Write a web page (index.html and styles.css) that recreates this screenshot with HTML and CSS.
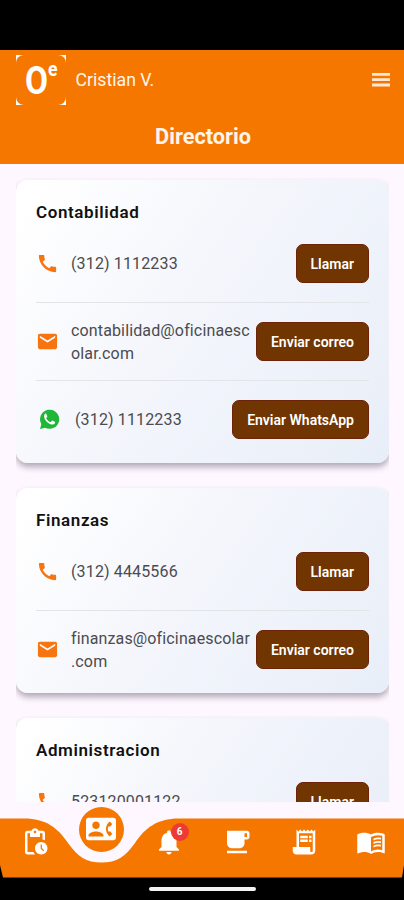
FILE: index.html
```html
<!DOCTYPE html>
<html lang="es">
<head>
  <meta charset="UTF-8">
  <meta name="viewport" content="width=device-width, initial-scale=1.0">
  <title>Oficina Escolar – Directorio</title>
  <link rel="stylesheet" href="styles.css">
</head>
<body>

  <!-- iconos compartidos -->
  <svg class="sprite" width="0" height="0">
    <symbol id="i-phone" viewBox="0 0 24 24">
      <path d="M20.01 15.38c-1.23 0-2.42-.2-3.53-.56-.35-.12-.74-.03-1.01.24l-1.57 1.97c-2.83-1.35-5.48-3.9-6.89-6.83l1.95-1.66c.27-.28.35-.67.24-1.02-.37-1.11-.56-2.3-.56-3.53 0-.54-.45-.99-.99-.99H4.19C3.65 3 3 3.24 3 3.99 3 13.28 10.73 21 20.01 21c.71 0 .99-.63.99-1.18v-3.45c0-.54-.45-.99-.99-.99z"/>
    </symbol>
    <symbol id="i-mail" viewBox="0 0 24 24">
      <path d="M20 4H4c-1.1 0-1.99.9-1.99 2L2 18c0 1.1.9 2 2 2h16c1.1 0 2-.9 2-2V6c0-1.1-.9-2-2-2zm0 4l-8 5-8-5V6l8 5 8-5v2z"/>
    </symbol>
  </svg>

  <div class="status-bar"></div>

  <header class="header">
    <div class="user-row">
      <div class="logo">
        <svg viewBox="0 0 50 50" width="50" height="50">
          <text class="logo-o" x="9" y="38.5" textLength="23" lengthAdjust="spacingAndGlyphs">O</text>
          <text class="logo-e" x="32" y="20.5" textLength="9.5" lengthAdjust="spacingAndGlyphs">e</text>
        </svg>
      </div>
      <span class="user-name">Cristian V.</span>
      <svg class="menu" viewBox="0 0 18 14" width="18" height="14"><path d="M0 0h18v2.8H0zM0 5.3h18v2.8H0zM0 10.6h18v2.8H0z"/></svg>
    </div>
    <h1>Directorio</h1>
  </header>

  <main class="directory">
    <section class="card">
      <h2>Contabilidad</h2>
      <div class="row">
        <svg class="icon"><use href="#i-phone"/></svg>
        <span class="value">(312) 1112233</span>
        <button>Llamar</button>
      </div>
      <div class="row">
        <svg class="icon"><use href="#i-mail"/></svg>
        <span class="value">contabilidad@oficinaescolar.com</span>
        <button>Enviar correo</button>
      </div>
      <div class="row">
        <svg class="icon whatsapp" viewBox="0 0 24 24">
          <path class="wa-bubble" d="M2.2 21.8l1.3-5A10 10 0 1 1 7.3 20.5z"/>
          <path class="wa-phone" d="M8.7 6.3c-.3-.6-.9-.6-1.3-.2-.8.8-1.2 1.7-1 2.9.7 4 4.1 7.400 8.100 8.200 1.400.3 2.600-.3 3.200-1.500.3-.6.3-1.100-.1-1.300l-2.300-1.200c-.4-.2-.7-.1-1 .3l-.8 1c-.2.3-.5.3-.8.2-1.900-.8-3.100-2-4-3.700-.2-.3-.1-.6.1-.8.8-.9 1.100-1.200.8-1.900z"/>
        </svg>
        <span class="value">(312) 1112233</span>
        <button>Enviar WhatsApp</button>
      </div>
    </section>

    <section class="card">
      <h2>Finanzas</h2>
      <div class="row">
        <svg class="icon"><use href="#i-phone"/></svg>
        <span class="value">(312) 4445566</span>
        <button>Llamar</button>
      </div>
      <div class="row">
        <svg class="icon"><use href="#i-mail"/></svg>
        <span class="value">finanzas@oficinaescolar.com</span>
        <button>Enviar correo</button>
      </div>
    </section>

    <section class="card">
      <h2>Administracion</h2>
      <div class="row">
        <svg class="icon"><use href="#i-phone"/></svg>
        <span class="value">523120001122</span>
        <button>Llamar</button>
      </div>
    </section>
  </main>

  <nav class="bottom-nav">
    <!-- barra con la curva bajo el elemento activo -->
    <svg class="nav-shape" viewBox="0 0 404 60" width="404" height="60">
      <path d="M0 .5H24C46 .5 58 10 68 25C78 39 86 44.5 101.5 44.5C117 44.5 125 39 135 25C145 10 157 .5 179 .5H404V47L402 59.5H3L0 47z"/>
    </svg>
    <a class="nav-item">
      <svg viewBox="0 0 24 24"><path d="M17 12c-2.760 0-5 2.240-5 5s2.240 5 5 5 5-2.240 5-5-2.240-5-5-5zm1.650 7.350L16.500 17.200V14h1v2.790l1.850 1.850-.7.71zM18 3h-3.180C14.400 1.840 13.300 1 12 1s-2.400.84-2.820 2H6c-1.100 0-2 .9-2 2v15c0 1.100.9 2 2 2h6.110c-.59-.57-1.070-1.250-1.420-2H6V5h2v3h8V5h2v5.080c.71.1 1.380.31 2 .6V5c0-1.100-.9-2-2-2zm-6 2c-.55 0-1-.45-1-1s.45-1 1-1 1 .45 1 1-.45 1-1 1z"/></svg>
    </a>
    <a class="nav-item active">
      <svg viewBox="0 0 24 24"><path d="M22 3H2C.9 3 0 3.900 0 5v14c0 1.100.9 2 2 2h20c1.100 0 1.990-.9 1.990-2L24 5c0-1.100-.9-2-2-2zM8 6c1.660 0 3 1.340 3 3s-1.340 3-3 3-3-1.340-3-3 1.340-3 3-3zm6 12H2v-1c0-2 4-3.100 6-3.100s6 1.100 6 3.100v1zm3.850-4h1.640L21 16l-1.990 1.990c-1.310-.98-2.280-2.380-2.730-3.990-.18-.64-.28-1.310-.28-2s.1-1.360.28-2c.45-1.620 1.420-3.010 2.730-3.990L21 8l-1.510 2h-1.640c-.22.63-.35 1.300-.35 2s.13 1.370.35 2z"/></svg>
    </a>
    <a class="nav-item">
      <svg viewBox="0 0 24 24"><path d="M12 22c1.100 0 2-.9 2-2h-4c0 1.100.89 2 2 2zm6-6v-5c0-3.070-1.640-5.640-4.500-6.320V4c0-.83-.67-1.500-1.500-1.500s-1.500.67-1.500 1.500v.68C7.630 5.360 6 7.920 6 11v5l-2 2v1h16v-1l-2-2z"/></svg>
      <span class="badge">6</span>
    </a>
    <a class="nav-item">
      <svg viewBox="0 0 24 24"><path d="M20 3H4v10c0 2.210 1.790 4 4 4h6c2.210 0 4-1.790 4-4v-3h2c1.110 0 2-.89 2-2V5c0-1.110-.89-2-2-2zm0 5h-2V5h2v3zM4 19h16v2H4v-2z"/></svg>
    </a>
    <a class="nav-item">
      <svg viewBox="0 0 24 24"><path d="M19.500 3.500L18 2l-1.500 1.500L15 2l-1.500 1.500L12 2l-1.500 1.500L9 2 7.500 3.500 6 2v14H3v3c0 1.660 1.340 3 3 3h12c1.660 0 3-1.340 3-3V2l-1.500 1.500zM19 19c0 .55-.45 1-1 1s-1-.45-1-1v-3H8V5h11v14zM9 7h6v2H9zM16 7h2v2h-2zM9 10h6v2H9zM16 10h2v2h-2z"/></svg>
    </a>
    <a class="nav-item">
      <svg viewBox="0 0 24 24"><path d="M21 5c-1.110-.35-2.330-.5-3.500-.5-1.950 0-4.050.4-5.500 1.500-1.450-1.100-3.550-1.500-5.500-1.500S2.450 4.900 1 6v14.650c0 .25.25.5.5.5.1 0 .15-.05.25-.05C3.100 20.450 5.050 20 6.500 20c1.950 0 4.050.4 5.500 1.500 1.350-.85 3.800-1.500 5.500-1.500 1.650 0 3.350.3 4.750 1.050.1.05.15.05.25.05.25 0 .5-.25.5-.5V6c-.6-.45-1.250-.75-2-1zm0 13.500c-1.100-.35-2.300-.5-3.500-.5-1.700 0-4.150.65-5.500 1.500V8c1.350-.85 3.800-1.500 5.500-1.500 1.200 0 2.400.15 3.500.5v11.500z"/><path d="M14 9.200q2.500-1.200 6-.7v1.500q-3.500-.5-6 .7zM14 12q2.500-1.200 6-.7v1.500q-3.500-.5-6 .7zM14 14.800q2.500-1.200 6-.7v1.500q-3.500-.5-6 .7z"/></svg>
    </a>
  </nav>

  <div class="gesture-bar"><span></span></div>

</body>
</html>
```
FILE: styles.css
```css
* {
  box-sizing: border-box;
}

body {
  margin: 0;
  height: 900px;
  display: flex;
  flex-direction: column;
  overflow: hidden;
  font-family: Roboto, sans-serif;
  background-color: #fef7ff;
}

.sprite {
  position: absolute;
}

.status-bar {
  height: 50px;
  background: #000;
}

.header {
  height: 114px;
  padding: 4px 14px 0 16px;
  background: #f67700;
  color: #fff5ec;
}

.user-row {
  display: flex;
  align-items: center;
  height: 51px;
}

.logo {
  width: 50px;
  height: 50px;
  background: linear-gradient(#f67700, #f67700) center / 48px 34px no-repeat, #fff;
}

.logo svg {
  display: block;
  border-radius: 8px;
  background: #f67700;
}

.logo text {
  fill: #fff;
  font-weight: 700;
}

.logo-o {
  font-size: 39px;
}

.logo-e {
  font-size: 21px;
}

.user-name {
  flex: 1;
  margin-left: 9.5px;
  font-size: 17.7px;
}

.menu {
  fill: #ffe9d6;
}

.header h1 {
  margin: 20px 0 0;
  text-align: center;
  font-size: 21.7px;
  line-height: 24px;
  font-weight: 700;
}

.directory {
  height: 638px;
  margin: 0 15px 0 16px;
  padding-top: 16px;
  overflow: hidden;
}

.card {
  margin-bottom: 25px;
  padding: 20px 20px 5px;
  border-radius: 12px;
  background: linear-gradient(125deg, #fff 5%, #f4f6fc 45%, #e8eef8 100%);
  box-shadow: 0 4px 6px rgba(60, 50, 70, 0.4);
}

.card h2 {
  margin: 0;
  font-size: 17px;
  line-height: 25px;
  font-weight: 600;
  letter-spacing: 0.6px;
  color: #111;
}

.row {
  display: flex;
  align-items: center;
  height: 77px;
}

.row + .row {
  height: 78px;
  border-top: 1px solid #e2e4e8;
}

.icon {
  flex: none;
  width: 23px;
  height: 23px;
  margin-right: 12px;
  fill: #f77510;
}

.icon.whatsapp {
  margin: 0 14px 0 2px;
}

.wa-bubble {
  fill: #20b638;
}

.wa-phone {
  fill: #fff;
}

.value {
  flex: 1;
  min-width: 0;
  padding-right: 4px;
  font-size: 16px;
  line-height: 23px;
  letter-spacing: 0.14px;
  color: #4b4b50;
  line-break: anywhere;
}

.row button {
  height: 39px;
  padding: 0 14px;
  border: 1px solid #6c2308;
  border-radius: 7px;
  background: #703500;
  color: #fff;
  font-family: inherit;
  font-size: 14px;
  font-weight: 600;
  white-space: nowrap;
}

.bottom-nav {
  display: flex;
  position: relative;
  height: 60px;
  margin-top: 16px;
  background: linear-gradient(#fef7ff 46px, #000 46px);
}

.nav-shape {
  position: absolute;
  top: 0;
  left: 0;
  fill: #f67700;
}

.nav-item {
  position: relative;
  flex: 1;
  display: flex;
  justify-content: center;
  padding: 9px 0 0 2px;
}

.nav-item svg {
  width: 30px;
  height: 30px;
  fill: #fff;
}

/* el elemento activo sobresale de la barra */
.nav-item.active {
  align-self: flex-start;
  flex: none;
  width: 45px;
  height: 45px;
  margin: -11px 11.2px 0;
  padding: 7px 0 0;
  border-radius: 50%;
  background: #f67700;
}

.badge {
  position: absolute;
  top: 5px;
  left: 36px;
  width: 18px;
  height: 18px;
  border-radius: 50%;
  background: #ee3a35;
  color: #fff;
  font-size: 10px;
  font-weight: 700;
  line-height: 18px;
  text-align: center;
}

.gesture-bar {
  flex: 1;
  display: flex;
  justify-content: center;
  padding-top: 9px;
  background: #000;
}

.gesture-bar span {
  width: 107px;
  height: 4px;
  border-radius: 2px;
  background: #f2f2f2;
}
```
